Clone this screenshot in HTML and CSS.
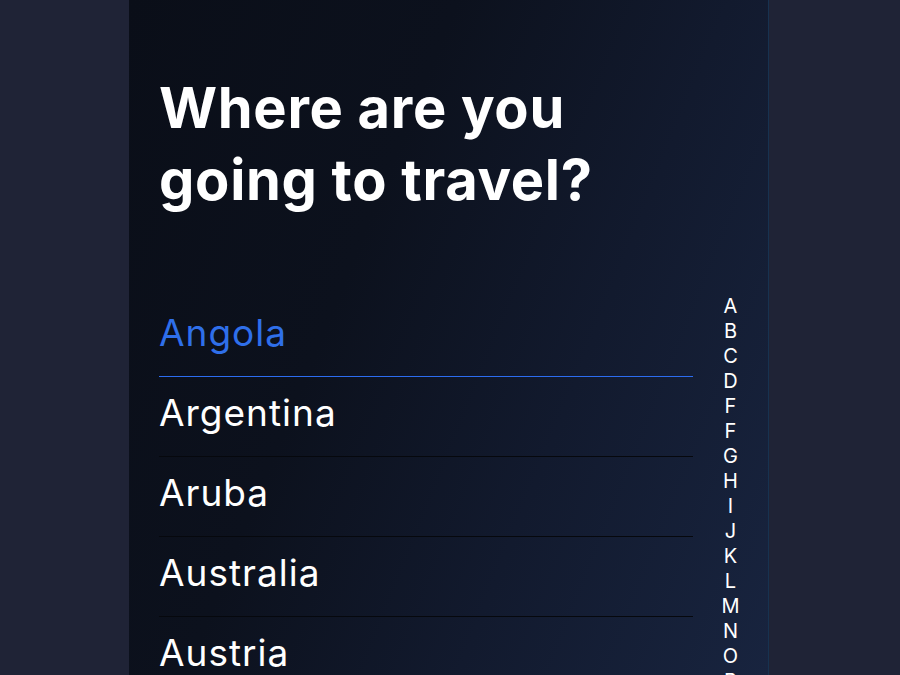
FILE: index.html
```html
<!DOCTYPE html>
<html lang="en">
<head>
<meta charset="utf-8">
<title>Where are you going to travel?</title>
<link rel="stylesheet" href="styles.css">
</head>
<body>
<main class="panel">
  <h1 class="title">Where are you<br>going to travel?</h1>
  <div class="picker">
    <ul class="countries">
      <li class="country selected">Angola</li>
      <li class="country">Argentina</li>
      <li class="country">Aruba</li>
      <li class="country">Australia</li>
      <li class="country">Austria</li>
    </ul>
    <ol class="alphabet">
      <li>A</li><li>B</li><li>C</li><li>D</li><li>F</li><li>F</li><li>G</li><li>H</li><li>I</li><li>J</li><li>K</li><li>L</li><li>M</li><li>N</li><li>O</li><li>P</li>
    </ol>
  </div>
</main>
</body>
</html>
```
FILE: styles.css
```css
html, body {
  margin: 0;
  padding: 0;
  height: 675px;
  overflow: hidden;
  background: #1f2336;
  font-family: "Inter", "Open Sans", sans-serif;
  color: #ffffff;
}

.panel {
  box-sizing: border-box;
  width: 640px;
  height: 675px;
  margin-left: 129px;
  padding-left: 30px;
  overflow: hidden;
  border-right: 1px solid #173250;
  background: linear-gradient(112deg, #0a0e18 0%, #0c111d 36%, #121a2e 66%, #18243f 100%);
}

.title {
  margin: 0;
  padding-top: 72px;
  font-size: 56px;
  line-height: 72px;
  font-weight: 700;
  letter-spacing: 0.7px;
}

.picker {
  display: flex;
  margin-top: 81px;
}

.countries {
  list-style: none;
  margin: 0;
  padding: 0;
  width: 534px;
}

.country {
  box-sizing: border-box;
  height: 80px;
  padding-top: 14px;
  font-size: 37px;
  line-height: 44px;
  font-weight: 400;
  letter-spacing: 1px;
  border-bottom: 1px solid #06080d;
}

.country.selected {
  color: #2f6fea;
  border-bottom-color: #2c6cf0;
}

.alphabet {
  list-style: none;
  margin: -3px 0 0 0;
  padding: 0;
  width: 75px;
  text-align: center;
  font-size: 20px;
  line-height: 25px;
}
```
